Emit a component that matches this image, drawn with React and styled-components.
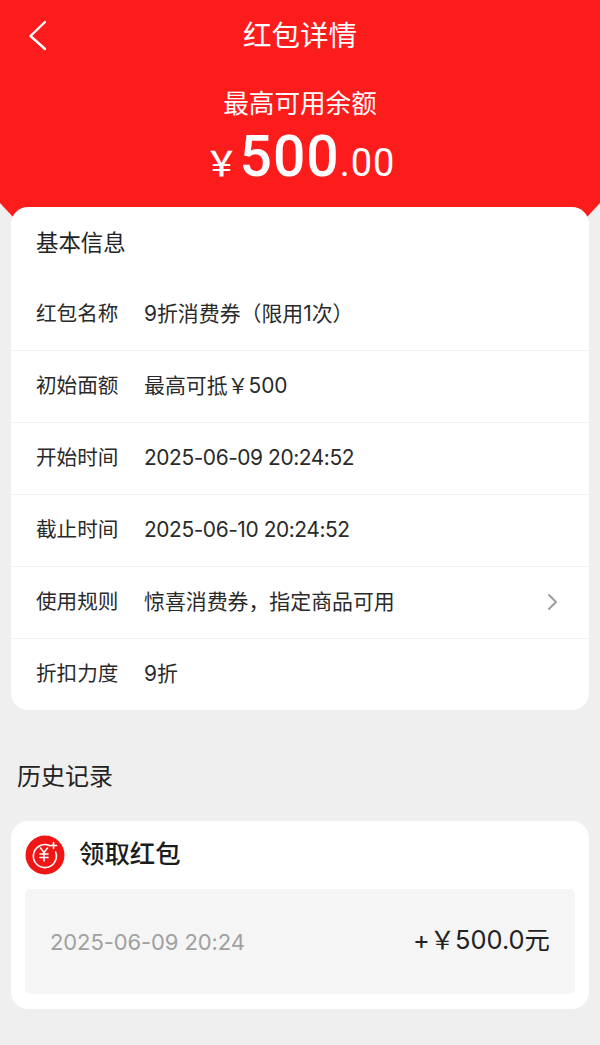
import React from "react";
import styled, { createGlobalStyle } from "styled-components";

const Global = createGlobalStyle`
  html, body { margin: 0; padding: 0; background: #efefef; }
  body { font-family: "Inter", "Noto Sans CJK SC", sans-serif; }
  * { box-sizing: border-box; }
`;

const Page = styled.div`
  width: 600px;
  height: 1045px;
  overflow: hidden;
  background: #efefef;
`;

const Hero = styled.header`
  height: 217px;
  background: #fd1c1c;
  color: #fff;
  clip-path: polygon(0 0, 100% 0, 100% 203px, 587px 217px, 13px 217px, 0 203px);
  display: flex;
  flex-direction: column;
  align-items: center;
`;

const NavBar = styled.div`
  position: relative;
  width: 100%;
  height: 70px;
  padding-top: 2px;
  display: flex;
  align-items: center;
  justify-content: center;
`;

const BackIcon = styled.svg`
  position: absolute;
  left: 24px;
  top: 19px;
  width: 26px;
  height: 34px;
`;

const NavTitle = styled.h1`
  margin: 0;
  font-size: 28.5px;
  font-weight: 400;
  line-height: 40px;
`;

const HeroLabel = styled.div`
  margin-top: 16px;
  font-size: 25.6px;
  line-height: 36px;
`;

const Amount = styled.div`
  display: flex;
  align-items: baseline;
  font-family: "Roboto", "Noto Sans CJK SC", sans-serif;
  line-height: 64px;
  height: 64px;
  margin-top: 3px;
`;

const Yen = styled.span`
  font-size: 34px;
  font-weight: 500;
  margin-right: 1px;
`;

const Whole = styled.span`
  font-size: 57px;
  font-weight: 500;
  letter-spacing: 1px;
`;

const Cents = styled.span`
  font-size: 38px;
  letter-spacing: 1px;
`;

const Card = styled.section`
  position: relative;
  margin: 0 11px;
  background: #fff;
  border-radius: 17px;
`;

const InfoCard = styled(Card)`
  margin-top: -10px;
  height: 503px;
  padding-top: 18px;
`;

const CardTitle = styled.h2`
  margin: 0;
  padding-left: 25px;
  height: 36px;
  font-size: 22.4px;
  font-weight: 400;
  line-height: 36px;
  color: #222;
`;

const Rows = styled.div`
  margin-top: 18px;
`;

const Row = styled.div`
  height: 72px;
  padding: 0 29px 2px 25px;
  display: flex;
  align-items: center;
  color: #2a2a2a;
  line-height: 30px;
  border-bottom: ${(p) => (p.$last ? "none" : "1px solid #f1f1f1")};
`;

const RowLabel = styled.span`
  width: 108px;
  flex: none;
  font-size: 20.6px;
`;

const RowValue = styled.span`
  flex: 1;
  font-size: 20.9px;
  letter-spacing: ${(p) => (p.$tight ? "-0.42px" : "0")};
`;

const Chevron = styled.svg`
  width: 12px;
  height: 18px;
  flex: none;
  margin-right: 2px;
`;

const SectionTitle = styled.h3`
  margin: 49px 0 0 17px;
  height: 36px;
  font-size: 24px;
  font-weight: 400;
  line-height: 36px;
  color: #222;
`;

const HistoryCard = styled(Card)`
  margin-top: 26px;
  height: 188px;
  padding: 14px;
`;

const HistoryHead = styled.div`
  display: flex;
  align-items: center;
  gap: 15px;
  height: 40px;
`;

const HistoryIcon = styled.svg`
  width: 40px;
  height: 40px;
  flex: none;
`;

const HistoryName = styled.span`
  font-size: 25.4px;
  font-weight: 500;
  line-height: 36px;
  margin-bottom: 3px;
  margin-left: -1px;
  color: #1c1c1c;
`;

const HistoryItem = styled.div`
  margin-top: 14px;
  height: 105px;
  padding: 0 25px;
  background: #f5f5f5;
  border-radius: 5px;
  display: flex;
  align-items: center;
  justify-content: space-between;
`;

const HistoryDate = styled.span`
  font-size: 22px;
  line-height: 34px;
  letter-spacing: -0.1px;
  color: #a0a0a0;
`;

const HistoryAmount = styled.span`
  font-size: 25.4px;
  line-height: 34px;
  margin-bottom: 3px;
  color: #222;
`;

const rows = [
  { label: "红包名称", value: "9折消费券（限用1次）" },
  { label: "初始面额", value: "最高可抵￥500" },
  { label: "开始时间", value: "2025-06-09 20:24:52", tight: true },
  { label: "截止时间", value: "2025-06-10 20:24:52", tight: true },
  { label: "使用规则", value: "惊喜消费券，指定商品可用", more: true },
  { label: "折扣力度", value: "9折" },
];

export default function App() {
  return (
    <Page>
      <Global />
      <Hero>
        <NavBar>
          <BackIcon viewBox="0 0 26 34" fill="none" stroke="#fff" strokeWidth="2.4" strokeLinecap="round" strokeLinejoin="round">
            <path d="M21 3 L6.5 17 L21 30" />
          </BackIcon>
          <NavTitle>红包详情</NavTitle>
        </NavBar>
        <HeroLabel>最高可用余额</HeroLabel>
        <Amount>
          <Yen>￥</Yen>
          <Whole>500</Whole>
          <Cents>.00</Cents>
        </Amount>
      </Hero>
      <InfoCard>
        <CardTitle>基本信息</CardTitle>
        <Rows>
          {rows.map((r, i) => (
            <Row key={r.label} $last={i === rows.length - 1}>
              <RowLabel>{r.label}</RowLabel>
              <RowValue $tight={r.tight}>{r.value}</RowValue>
              {r.more && (
                <Chevron viewBox="0 0 12 18" fill="none" stroke="#999" strokeWidth="1.8" strokeLinecap="round" strokeLinejoin="round">
                  <path d="M3 2 L10 9 L3 16" />
                </Chevron>
              )}
            </Row>
          ))}
        </Rows>
      </InfoCard>
      <SectionTitle>历史记录</SectionTitle>
      <HistoryCard>
        <HistoryHead>
          <HistoryIcon viewBox="0 0 40 40">
            <circle cx="20" cy="20" r="19.5" fill="#f01616" />
            <path d="M24.5 10.6 A11.5 11.5 0 1 0 30.6 17" fill="none" stroke="#fff" strokeWidth="1.6" strokeLinecap="round" />
            <path d="M15.5 13 L19 17.5 L22.5 13 M19 17.5 V26 M15 19 H23 M15 22.5 H23" fill="none" stroke="#fff" strokeWidth="1.6" strokeLinecap="round" strokeLinejoin="round" />
            <path d="M28.5 7.5 V13.5 M25.5 10.5 H31.5" fill="none" stroke="#fff" strokeWidth="1.6" strokeLinecap="round" />
          </HistoryIcon>
          <HistoryName>领取红包</HistoryName>
        </HistoryHead>
        <HistoryItem>
          <HistoryDate>2025-06-09 20:24</HistoryDate>
          <HistoryAmount>+￥500.0元</HistoryAmount>
        </HistoryItem>
      </HistoryCard>
    </Page>
  );
}
